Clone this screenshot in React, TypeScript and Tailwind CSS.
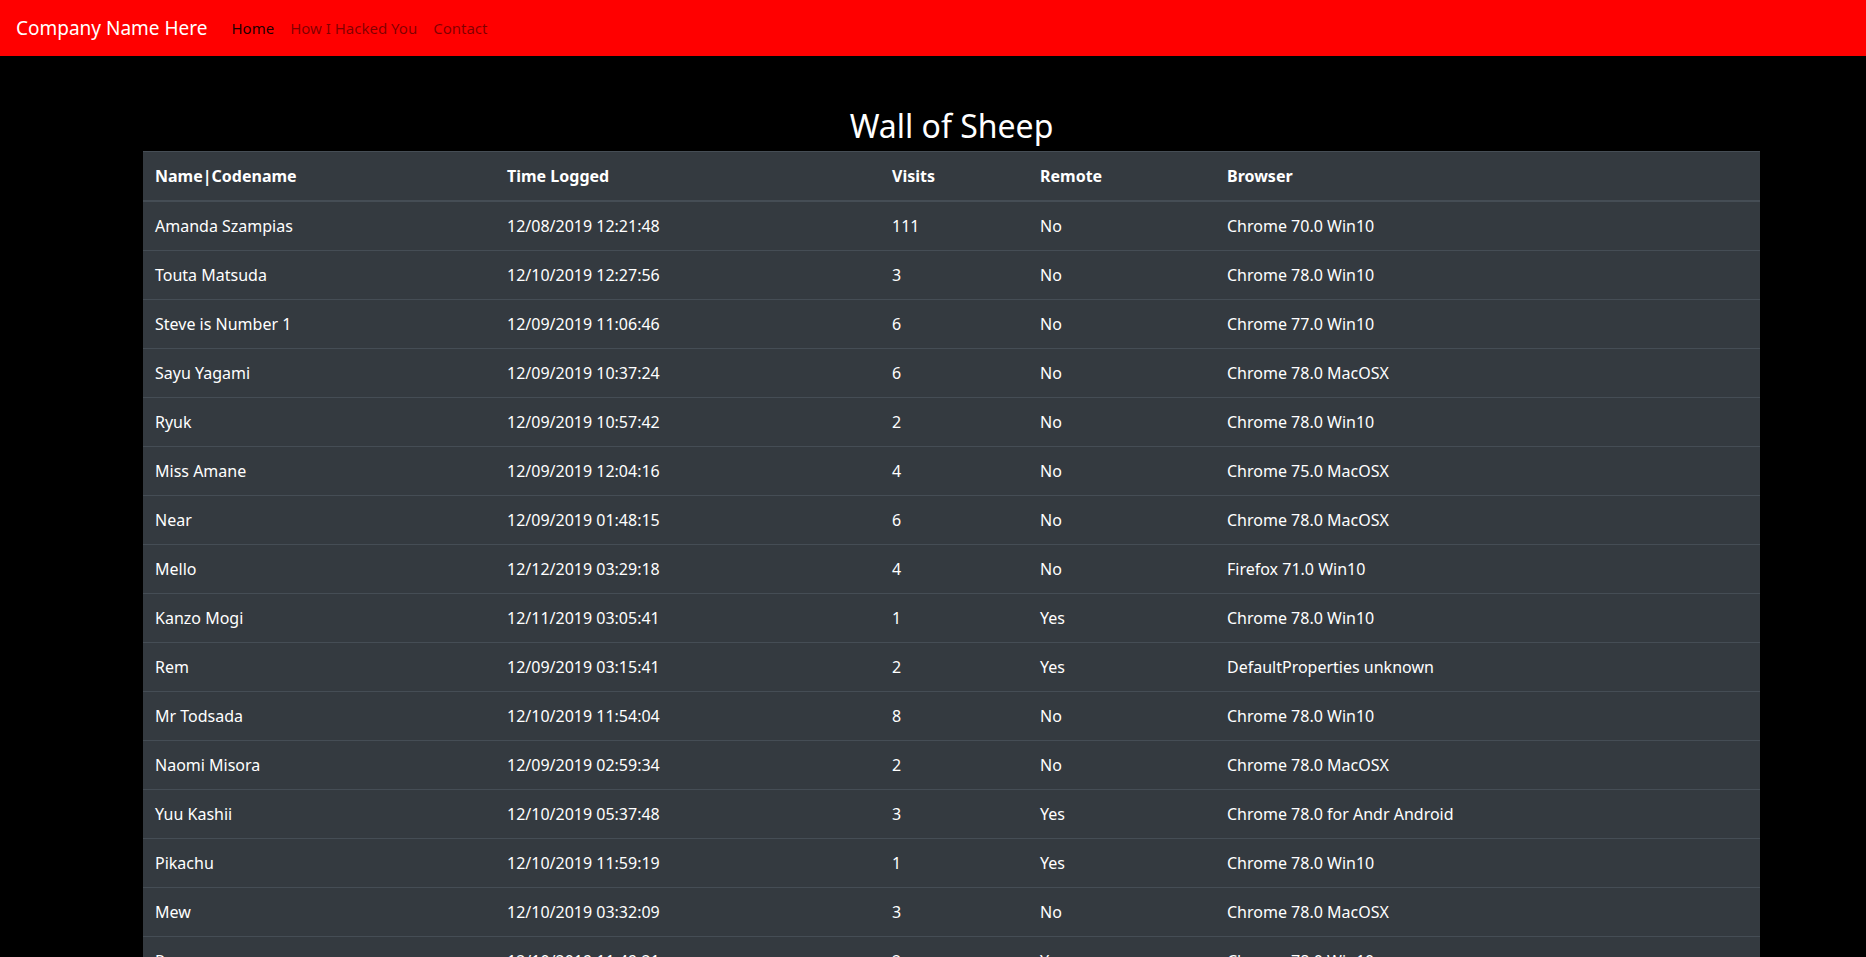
import React from 'react';

type Sheep = {
  name: string;
  time: string;
  visits: number;
  remote: 'Yes' | 'No';
  browser: string;
};

const sheep: Sheep[] = [
  { name: 'Amanda Szampias', time: '12/08/2019 12:21:48', visits: 111, remote: 'No', browser: 'Chrome 70.0 Win10' },
  { name: 'Touta Matsuda', time: '12/10/2019 12:27:56', visits: 3, remote: 'No', browser: 'Chrome 78.0 Win10' },
  { name: 'Steve is Number 1', time: '12/09/2019 11:06:46', visits: 6, remote: 'No', browser: 'Chrome 77.0 Win10' },
  { name: 'Sayu Yagami', time: '12/09/2019 10:37:24', visits: 6, remote: 'No', browser: 'Chrome 78.0 MacOSX' },
  { name: 'Ryuk', time: '12/09/2019 10:57:42', visits: 2, remote: 'No', browser: 'Chrome 78.0 Win10' },
  { name: 'Miss Amane', time: '12/09/2019 12:04:16', visits: 4, remote: 'No', browser: 'Chrome 75.0 MacOSX' },
  { name: 'Near', time: '12/09/2019 01:48:15', visits: 6, remote: 'No', browser: 'Chrome 78.0 MacOSX' },
  { name: 'Mello', time: '12/12/2019 03:29:18', visits: 4, remote: 'No', browser: 'Firefox 71.0 Win10' },
  { name: 'Kanzo Mogi', time: '12/11/2019 03:05:41', visits: 1, remote: 'Yes', browser: 'Chrome 78.0 Win10' },
  { name: 'Rem', time: '12/09/2019 03:15:41', visits: 2, remote: 'Yes', browser: 'DefaultProperties unknown' },
  { name: 'Mr Todsada', time: '12/10/2019 11:54:04', visits: 8, remote: 'No', browser: 'Chrome 78.0 Win10' },
  { name: 'Naomi Misora', time: '12/09/2019 02:59:34', visits: 2, remote: 'No', browser: 'Chrome 78.0 MacOSX' },
  { name: 'Yuu Kashii', time: '12/10/2019 05:37:48', visits: 3, remote: 'Yes', browser: 'Chrome 78.0 for Andr Android' },
  { name: 'Pikachu', time: '12/10/2019 11:59:19', visits: 1, remote: 'Yes', browser: 'Chrome 78.0 Win10' },
  { name: 'Mew', time: '12/10/2019 03:32:09', visits: 3, remote: 'No', browser: 'Chrome 78.0 MacOSX' },
  { name: 'Rem', time: '12/10/2019 11:49:21', visits: 2, remote: 'Yes', browser: 'Chrome 78.0 Win10' },
];

const cell = 'px-3 py-3 leading-6 border-t border-[#454d55] align-top';

export default function App() {
  return (
    <div className="min-h-screen bg-black text-white font-['Noto_Sans','Liberation_Sans',sans-serif] text-[16px]">
      {/* Navbar */}
      <nav className="h-14 bg-[#ff0000] flex items-center px-4">
        <span className="text-[19px] leading-[30px] py-[5px] mr-4 text-white">Company Name Here</span>
        <div className="flex items-center text-[15px]">
          <a className="px-2 text-[rgba(0,0,0,0.9)]">Home</a>
          <a className="px-2 text-[rgba(0,0,0,0.5)]">How I Hacked You</a>
          <a className="px-2 text-[rgba(0,0,0,0.5)]">Contact</a>
        </div>
      </nav>

      <div className="ml-[143px] w-[1617px]">
        <h2 className="mt-[51px] mb-[6px] text-center text-[32px] leading-[38px] font-normal">Wall of Sheep</h2>

        <table className="w-full bg-[#343a40] border-collapse table-fixed">
          <colgroup>
            <col className="w-[352px]" />
            <col className="w-[385px]" />
            <col className="w-[148px]" />
            <col className="w-[187px]" />
            <col />
          </colgroup>
          <thead>
            <tr>
              {['Name|Codename', 'Time Logged', 'Visits', 'Remote', 'Browser'].map(h => (
                <th key={h} className={`${cell} border-b-2 border-b-[#454d55] text-left font-bold`}>{h}</th>
              ))}
            </tr>
          </thead>
          <tbody>
            {sheep.map((s, i) => (
              <tr key={i}>
                <td className={cell}>{s.name}</td>
                <td className={cell}>{s.time}</td>
                <td className={cell}>{s.visits}</td>
                <td className={cell}>{s.remote}</td>
                <td className={cell}>{s.browser}</td>
              </tr>
            ))}
          </tbody>
        </table>
      </div>
    </div>
  );
}
